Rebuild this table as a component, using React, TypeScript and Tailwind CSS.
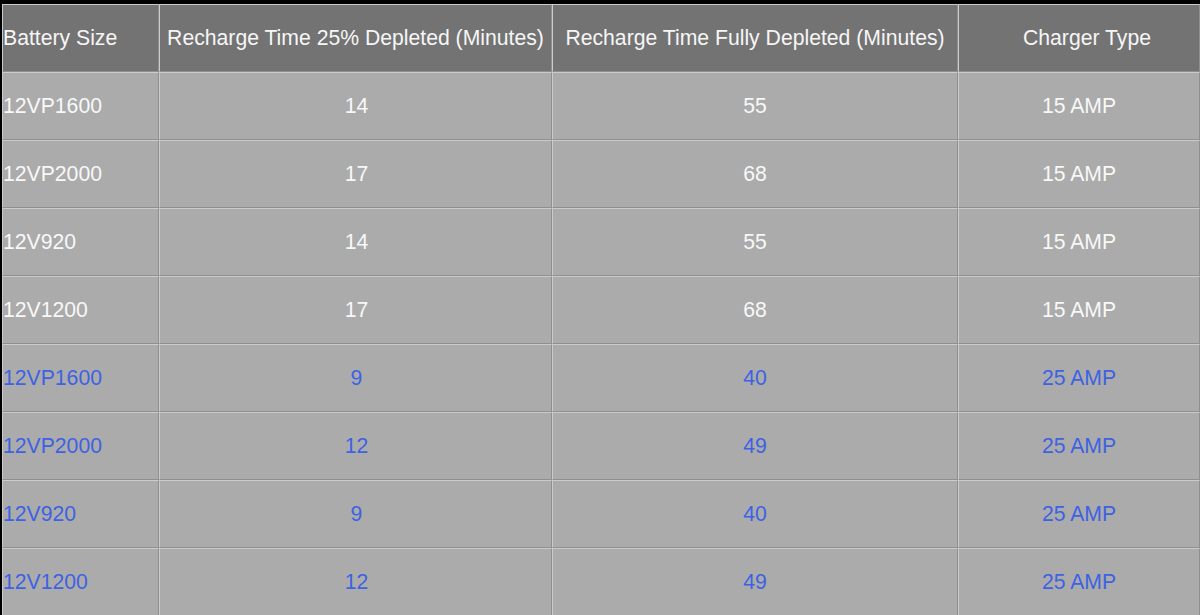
const rows = [
  { size: '12VP1600', quarter: '14', full: '55', charger: '15 AMP', fast: false },
  { size: '12VP2000', quarter: '17', full: '68', charger: '15 AMP', fast: false },
  { size: '12V920', quarter: '14', full: '55', charger: '15 AMP', fast: false },
  { size: '12V1200', quarter: '17', full: '68', charger: '15 AMP', fast: false },
  { size: '12VP1600', quarter: '9', full: '40', charger: '25 AMP', fast: true },
  { size: '12VP2000', quarter: '12', full: '49', charger: '25 AMP', fast: true },
  { size: '12V920', quarter: '9', full: '40', charger: '25 AMP', fast: true },
  { size: '12V1200', quarter: '12', full: '49', charger: '25 AMP', fast: true },
];

const cell = 'h-[68px] p-0 border-t border-l border-b border-r border-t-[#cbcbcb] border-l-[#cbcbcb] border-b-[#8f8f8f] border-r-[#8f8f8f]';

export default function App() {
  return (
    <div className="h-[615px] w-[1200px] overflow-hidden bg-black pt-[4px] pl-[2px] font-['Liberation_Sans',Arial,sans-serif] text-[21.2px]">
      <table className="w-[1198px] table-fixed border-separate border-spacing-0">
        <colgroup>
          <col className="w-[157px]" />
          <col className="w-[393px]" />
          <col className="w-[406px]" />
          <col className="w-[242px]" />
        </colgroup>
        <thead>
          <tr className="bg-[#737373] text-[#f6f6f6]">
            <th className={`${cell} text-left font-normal`}>Battery Size</th>
            <th className={`${cell} text-center font-normal`}>Recharge Time 25% Depleted (Minutes)</th>
            <th className={`${cell} text-center font-normal`}>Recharge Time Fully Depleted (Minutes)</th>
            <th className={`${cell} pl-[16px] text-center font-normal`}>Charger Type</th>
          </tr>
        </thead>
        <tbody>
          {rows.map((r, i) => (
            <tr key={i} className={`bg-[#ababab] ${r.fast ? 'text-[#3d62e3]' : 'text-[#f8f8f8]'}`}>
              <td className={`${cell} text-left`}>{r.size}</td>
              <td className={`${cell} pl-[2px] text-center`}>{r.quarter}</td>
              <td className={`${cell} text-center`}>{r.full}</td>
              <td className={`${cell} text-center`}>{r.charger}</td>
            </tr>
          ))}
        </tbody>
      </table>
    </div>
  );
}
